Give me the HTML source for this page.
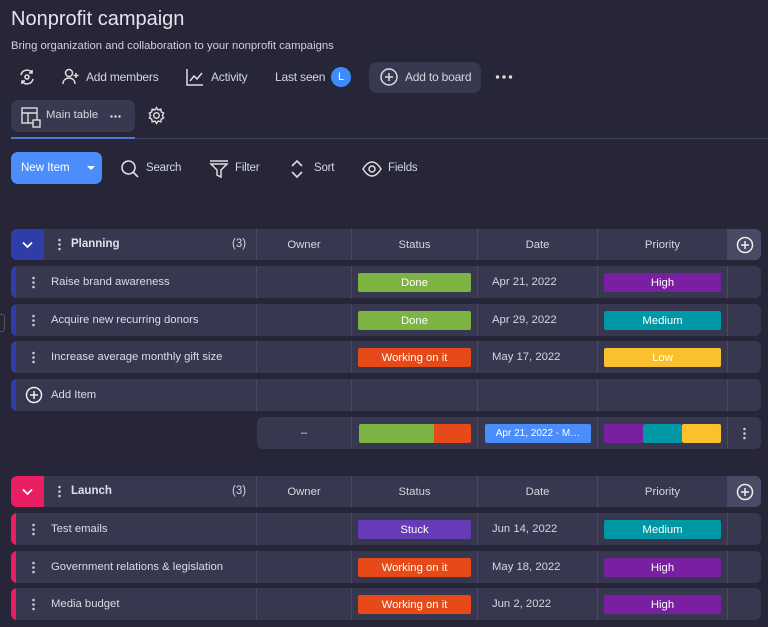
<!DOCTYPE html><html><head><style>
*{box-sizing:border-box;margin:0;padding:0}
body{width:768px;height:627px;overflow:hidden;background:#262638;font-family:"Liberation Sans",sans-serif;color:#d5d6e0;position:relative}
.a{position:absolute}
.t{font-size:12px;color:#d5d6e0;letter-spacing:-0.2px}
.row{position:absolute;left:11px;width:750px;height:32px;background:#373750;border-radius:6px;overflow:hidden}
.c{position:absolute;top:0;height:100%;border-left:1px solid #4a4a64;display:flex;align-items:center;justify-content:center;font-size:11.3px}
.pill{position:absolute;top:7px;height:19px;color:#fff;font-size:11.3px;display:flex;align-items:center;justify-content:center;border-radius:2px}
.bar{position:absolute;left:0;top:0;width:5px;height:100%}
.nm{position:absolute;left:40px;top:0;height:100%;display:flex;align-items:center;font-size:11.3px;color:#dcdce6}
svg{position:absolute}
</style></head><body>
<div class="a" style="left:11px;top:8px;font-size:20px;color:#e4e4ec">Nonprofit campaign</div>
<div class="a" style="left:11px;top:40px;font-size:11.3px;color:#d0d0da">Bring organization and collaboration to your nonprofit campaigns</div>
<svg style="left:17px;top:67px" width="20" height="20" viewBox="0 0 20 20" fill="none" stroke="#ddd" stroke-width="1.6"><path d="M4 8a6 6 0 0 1 11-2M16 12a6 6 0 0 1-11 2M15 3v3h-3M5 17v-3h3"/><circle cx="10" cy="10" r="2"/></svg>
<svg style="left:61px;top:67px" width="20" height="20" viewBox="0 0 20 20" fill="none" stroke="#ddd" stroke-width="1.5"><circle cx="8" cy="6" r="3.5"/><path d="M2 17c0-4 3-6 6-6s6 2 6 6M15 6v5M12.5 8.5h5"/></svg>
<div class="a t" style="left:86px;top:70px">Add members</div>
<svg style="left:185px;top:67px" width="20" height="20" viewBox="0 0 20 20" fill="none" stroke="#ddd" stroke-width="1.5"><path d="M2 2v16h16M5 14l4-5 3 3 5-6"/></svg>
<div class="a t" style="left:211px;top:70px">Activity</div>
<div class="a t" style="left:275px;top:70px">Last seen</div>
<div class="a" style="left:331px;top:67px;width:20px;height:20px;border-radius:50%;background:#3d8bff;color:#fff;font-size:11px;text-align:center;line-height:20px">L</div>
<div class="a" style="left:369px;top:62px;width:112px;height:31px;border-radius:8px;background:#383850"></div>
<svg style="left:379px;top:67px" width="20" height="20" viewBox="0 0 20 20" fill="none" stroke="#ddd" stroke-width="1.5"><circle cx="10" cy="10" r="8"/><path d="M10 6v8M6 10h8"/></svg>
<div class="a t" style="left:405px;top:70px">Add to board</div>
<svg style="left:495px;top:75px" width="18" height="4" viewBox="0 0 18 4" fill="#ddd"><circle cx="2.5" cy="2" r="1.7"/><circle cx="9" cy="2" r="1.7"/><circle cx="15.5" cy="2" r="1.7"/></svg>
<div class="a" style="left:11px;top:100px;width:124px;height:32px;border-radius:7px;background:#383850"></div>
<svg style="left:21px;top:107px" width="22" height="22" viewBox="0 0 22 22" fill="none" stroke="#ddd" stroke-width="1.4"><rect x="1" y="1" width="15" height="15"/><path d="M1 6h15M7 6v10"/><rect x="12" y="13" width="7" height="7" fill="#383850"/></svg>
<div class="a" style="left:46px;top:109px;font-size:11.3px">Main table</div>
<svg style="left:110px;top:115px" width="11" height="3" viewBox="0 0 11 3" fill="#ddd"><circle cx="1.5" cy="1.5" r="1.2"/><circle cx="5.5" cy="1.5" r="1.2"/><circle cx="9.5" cy="1.5" r="1.2"/></svg>
<svg style="left:147px;top:106px" width="19" height="19" viewBox="0 0 24 24" fill="none" stroke="#ddd" stroke-width="1.8"><circle cx="12" cy="12" r="3.5"/><path d="M12 2l2 3 3.5-1 .5 3.5 3 1.5-1.5 3 1.5 3-3 1.5-.5 3.5-3.5-1-2 3-2-3-3.5 1-.5-3.5-3-1.5 1.5-3-1.5-3 3-1.5.5-3.5 3.5 1z"/></svg>
<div class="a" style="left:11px;top:138px;width:757px;height:1px;background:#3f3f58"></div>
<div class="a" style="left:11px;top:137px;width:124px;height:2px;background:#4b7ad6"></div>
<div class="a" style="left:11px;top:152px;width:91px;height:32px;border-radius:7px;background:#4b8dfb"></div>
<div class="a" style="left:21px;top:162px;font-size:11.5px;color:#fff">New Item</div>
<div class="a" style="left:87px;top:166px;border:4px solid transparent;border-top:4px solid #fff"></div>
<svg style="left:120px;top:159px" width="20" height="20" viewBox="0 0 20 20" fill="none" stroke="#ddd" stroke-width="1.6"><circle cx="8.5" cy="8.5" r="6.5"/><path d="M13 13l5 5"/></svg>
<div class="a t" style="left:146px;top:162px;font-size:11.5px">Search</div>
<svg style="left:209px;top:159px" width="20" height="20" viewBox="0 0 20 20" fill="none" stroke="#ddd" stroke-width="1.5"><path d="M1 2h18M2 5h16l-6 6v7l-4-2v-5z"/></svg>
<div class="a t" style="left:235px;top:162px;font-size:11.5px">Filter</div>
<svg style="left:289px;top:159px" width="16" height="20" viewBox="0 0 16 20" fill="none" stroke="#ddd" stroke-width="1.6"><path d="M3 7l5-5 5 5M3 13l5 5 5-5"/></svg>
<div class="a t" style="left:314px;top:162px;font-size:11.5px">Sort</div>
<svg style="left:362px;top:160px" width="20" height="18" viewBox="0 0 20 18" fill="none" stroke="#ddd" stroke-width="1.5"><path d="M1 9c3-5 6-7 9-7s6 2 9 7c-3 5-6 7-9 7s-6-2-9-7z"/><circle cx="10" cy="9" r="3"/></svg>
<div class="a t" style="left:388px;top:162px;font-size:11.5px">Fields</div>
<div class="a" style="left:0;top:314px;width:5px;height:18px;border:1px solid #555;border-left:none;border-radius:0 3px 3px 0"></div>

<!-- Planning group -->
<div class="row" style="top:229px;height:31px">
 <div class="a" style="left:0;top:0;width:33px;height:100%;background:#2f3da8"></div>
 <svg style="left:11px;top:12px" width="11" height="8" viewBox="0 0 11 8" fill="none" stroke="#fff" stroke-width="1.8"><path d="M1 1.5l4.5 4.5 4.5-4.5"/></svg>
 <svg style="left:47px;top:9px" width="3" height="13" viewBox="0 0 3 13" fill="#ccc"><circle cx="1.5" cy="2" r="1.3"/><circle cx="1.5" cy="6.5" r="1.3"/><circle cx="1.5" cy="11" r="1.3"/></svg>
 <div class="a" style="left:60px;top:9px;font-size:11.5px;font-weight:bold;color:#e0e0ea">Planning</div>
 <div class="a" style="left:221px;top:9px;font-size:11.5px">(3)</div>
 <div class="c" style="left:245px;width:95px">Owner</div>
 <div class="c" style="left:340px;width:126px">Status</div>
 <div class="c" style="left:466px;width:120px">Date</div>
 <div class="c" style="left:586px;width:130px">Priority</div>
 <div class="c" style="left:716px;width:34px;background:#4a4a66"><svg style="left:8px;top:7px" width="18" height="18" viewBox="0 0 18 18" fill="none" stroke="#eee" stroke-width="1.5"><circle cx="9" cy="9" r="7.5"/><path d="M9 5v8M5 9h8"/></svg></div>
</div>
<div class="row" style="top:266px"><div class="bar" style="background:#2f3da8"></div><svg style="left:21px;top:10px" width="3" height="13" viewBox="0 0 3 13" fill="#ccc"><circle cx="1.5" cy="2" r="1.3"/><circle cx="1.5" cy="6.5" r="1.3"/><circle cx="1.5" cy="11" r="1.3"/></svg><div class="nm">Raise brand awareness</div><div class="c" style="left:245px;width:95px"></div><div class="c" style="left:340px;width:126px"><div class="pill" style="left:6px;width:113px;background:#7cb342">Done</div></div><div class="c" style="left:466px;width:120px;justify-content:flex-start;padding-left:14px">Apr 21, 2022</div><div class="c" style="left:586px;width:130px"><div class="pill" style="left:6px;width:117px;background:#7b1fa2">High</div></div><div class="c" style="left:716px;width:34px"></div></div>
<div class="row" style="top:304px"><div class="bar" style="background:#2f3da8"></div><svg style="left:21px;top:10px" width="3" height="13" viewBox="0 0 3 13" fill="#ccc"><circle cx="1.5" cy="2" r="1.3"/><circle cx="1.5" cy="6.5" r="1.3"/><circle cx="1.5" cy="11" r="1.3"/></svg><div class="nm">Acquire new recurring donors</div><div class="c" style="left:245px;width:95px"></div><div class="c" style="left:340px;width:126px"><div class="pill" style="left:6px;width:113px;background:#7cb342">Done</div></div><div class="c" style="left:466px;width:120px;justify-content:flex-start;padding-left:14px">Apr 29, 2022</div><div class="c" style="left:586px;width:130px"><div class="pill" style="left:6px;width:117px;background:#0097a7">Medium</div></div><div class="c" style="left:716px;width:34px"></div></div>
<div class="row" style="top:341px"><div class="bar" style="background:#2f3da8"></div><svg style="left:21px;top:10px" width="3" height="13" viewBox="0 0 3 13" fill="#ccc"><circle cx="1.5" cy="2" r="1.3"/><circle cx="1.5" cy="6.5" r="1.3"/><circle cx="1.5" cy="11" r="1.3"/></svg><div class="nm">Increase average monthly gift size</div><div class="c" style="left:245px;width:95px"></div><div class="c" style="left:340px;width:126px"><div class="pill" style="left:6px;width:113px;background:#e64a19">Working on it</div></div><div class="c" style="left:466px;width:120px;justify-content:flex-start;padding-left:14px">May 17, 2022</div><div class="c" style="left:586px;width:130px"><div class="pill" style="left:6px;width:117px;background:#fbc02d">Low</div></div><div class="c" style="left:716px;width:34px"></div></div>
<div class="row" style="top:379px"><div class="bar" style="background:#2f3da8"></div><svg style="left:14px;top:7px" width="18" height="18" viewBox="0 0 18 18" fill="none" stroke="#eee" stroke-width="1.5"><circle cx="9" cy="9" r="7.5"/><path d="M9 5v8M5 9h8"/></svg><div class="nm">Add Item</div><div class="c" style="left:245px;width:95px"></div><div class="c" style="left:340px;width:126px"></div><div class="c" style="left:466px;width:120px"></div><div class="c" style="left:586px;width:130px"></div><div class="c" style="left:716px;width:34px"></div></div>
<div class="row" style="top:417px;left:257px;width:504px"><div class="c" style="left:0;width:94px;border:none">–</div><div class="c" style="left:94px;width:126px"><div class="pill" style="left:7px;width:75px;background:#7cb342;border-radius:2px 0 0 2px"></div><div class="pill" style="left:82px;width:37px;background:#e64a19;border-radius:0 2px 2px 0"></div></div><div class="c" style="left:220px;width:120px"><div class="pill" style="left:7px;width:106px;background:#4b8dfb;font-size:10px">Apr 21, 2022 - M…</div></div><div class="c" style="left:340px;width:130px"><div class="pill" style="left:6px;width:39px;background:#7b1fa2"></div><div class="pill" style="left:45px;width:39px;background:#0097a7"></div><div class="pill" style="left:84px;width:39px;background:#fbc02d"></div></div><div class="c" style="left:470px;width:34px"><svg style="left:15px;top:10px" width="3" height="13" viewBox="0 0 3 13" fill="#ccc"><circle cx="1.5" cy="2" r="1.3"/><circle cx="1.5" cy="6.5" r="1.3"/><circle cx="1.5" cy="11" r="1.3"/></svg></div></div>

<!-- Launch group -->
<div class="row" style="top:476px;height:31px">
 <div class="a" style="left:0;top:0;width:33px;height:100%;background:#e91e63"></div>
 <svg style="left:11px;top:12px" width="11" height="8" viewBox="0 0 11 8" fill="none" stroke="#fff" stroke-width="1.8"><path d="M1 1.5l4.5 4.5 4.5-4.5"/></svg>
 <svg style="left:47px;top:9px" width="3" height="13" viewBox="0 0 3 13" fill="#ccc"><circle cx="1.5" cy="2" r="1.3"/><circle cx="1.5" cy="6.5" r="1.3"/><circle cx="1.5" cy="11" r="1.3"/></svg>
 <div class="a" style="left:60px;top:9px;font-size:11.5px;font-weight:bold;color:#e0e0ea">Launch</div>
 <div class="a" style="left:221px;top:9px;font-size:11.5px">(3)</div>
 <div class="c" style="left:245px;width:95px">Owner</div>
 <div class="c" style="left:340px;width:126px">Status</div>
 <div class="c" style="left:466px;width:120px">Date</div>
 <div class="c" style="left:586px;width:130px">Priority</div>
 <div class="c" style="left:716px;width:34px;background:#4a4a66"><svg style="left:8px;top:7px" width="18" height="18" viewBox="0 0 18 18" fill="none" stroke="#eee" stroke-width="1.5"><circle cx="9" cy="9" r="7.5"/><path d="M9 5v8M5 9h8"/></svg></div>
</div>
<div class="row" style="top:513px"><div class="bar" style="background:#e91e63"></div><svg style="left:21px;top:10px" width="3" height="13" viewBox="0 0 3 13" fill="#ccc"><circle cx="1.5" cy="2" r="1.3"/><circle cx="1.5" cy="6.5" r="1.3"/><circle cx="1.5" cy="11" r="1.3"/></svg><div class="nm">Test emails</div><div class="c" style="left:245px;width:95px"></div><div class="c" style="left:340px;width:126px"><div class="pill" style="left:6px;width:113px;background:#673ab7">Stuck</div></div><div class="c" style="left:466px;width:120px;justify-content:flex-start;padding-left:14px">Jun 14, 2022</div><div class="c" style="left:586px;width:130px"><div class="pill" style="left:6px;width:117px;background:#0097a7">Medium</div></div><div class="c" style="left:716px;width:34px"></div></div>
<div class="row" style="top:551px"><div class="bar" style="background:#e91e63"></div><svg style="left:21px;top:10px" width="3" height="13" viewBox="0 0 3 13" fill="#ccc"><circle cx="1.5" cy="2" r="1.3"/><circle cx="1.5" cy="6.5" r="1.3"/><circle cx="1.5" cy="11" r="1.3"/></svg><div class="nm">Government relations &amp; legislation</div><div class="c" style="left:245px;width:95px"></div><div class="c" style="left:340px;width:126px"><div class="pill" style="left:6px;width:113px;background:#e64a19">Working on it</div></div><div class="c" style="left:466px;width:120px;justify-content:flex-start;padding-left:14px">May 18, 2022</div><div class="c" style="left:586px;width:130px"><div class="pill" style="left:6px;width:117px;background:#7b1fa2">High</div></div><div class="c" style="left:716px;width:34px"></div></div>
<div class="row" style="top:588px"><div class="bar" style="background:#e91e63"></div><svg style="left:21px;top:10px" width="3" height="13" viewBox="0 0 3 13" fill="#ccc"><circle cx="1.5" cy="2" r="1.3"/><circle cx="1.5" cy="6.5" r="1.3"/><circle cx="1.5" cy="11" r="1.3"/></svg><div class="nm">Media budget</div><div class="c" style="left:245px;width:95px"></div><div class="c" style="left:340px;width:126px"><div class="pill" style="left:6px;width:113px;background:#e64a19">Working on it</div></div><div class="c" style="left:466px;width:120px;justify-content:flex-start;padding-left:14px">Jun 2, 2022</div><div class="c" style="left:586px;width:130px"><div class="pill" style="left:6px;width:117px;background:#7b1fa2">High</div></div><div class="c" style="left:716px;width:34px"></div></div>
</body></html>
